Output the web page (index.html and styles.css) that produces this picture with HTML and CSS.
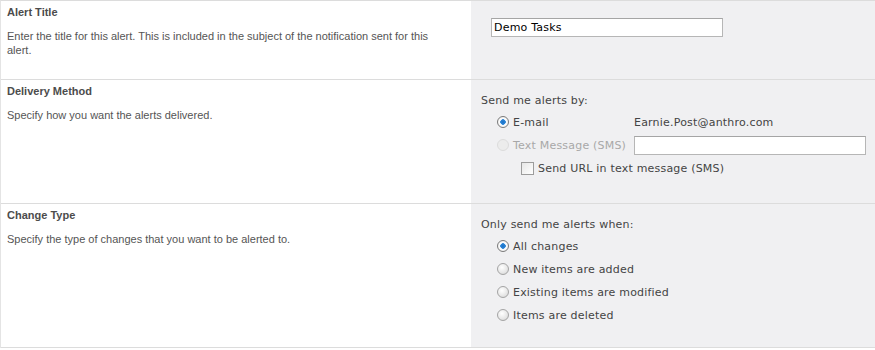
FILE: index.html
```html
<!DOCTYPE html>
<html lang="en">
<head>
    <meta charset="UTF-8">
    <title>New Alert</title>
    <link rel="stylesheet" href="styles.css">
</head>
<body>
    <div class="form-table">
        <!-- Alert Title -->
        <div class="form-row row-title">
            <div class="form-label">
                <h3>Alert Title</h3>
                <p>Enter the title for this alert. This is included in the subject of the notification sent for this alert.</p>
            </div>
            <div class="form-body">
                <input type="text" class="text-box title-box" value="Demo Tasks">
            </div>
        </div>

        <!-- Delivery Method -->
        <div class="form-row row-delivery">
            <div class="form-label">
                <h3>Delivery Method</h3>
                <p>Specify how you want the alerts delivered.</p>
            </div>
            <div class="form-body">
                <div class="caption">Send me alerts by:</div>
                <div class="option-list">
                    <label class="option">
                        <input type="radio" name="delivery" checked>
                        <span class="option-text delivery-text">E-mail</span>
                        <span class="address">Earnie.Post@anthro.com</span>
                    </label>
                    <label class="option disabled">
                        <input type="radio" name="delivery" disabled>
                        <span class="option-text delivery-text">Text Message (SMS)</span>
                        <input type="text" class="text-box sms-box">
                    </label>
                    <label class="option sub-option">
                        <input type="checkbox">
                        <span class="option-text">Send URL in text message (SMS)</span>
                    </label>
                </div>
            </div>
        </div>

        <!-- Change Type -->
        <div class="form-row row-change">
            <div class="form-label">
                <h3>Change Type</h3>
                <p>Specify the type of changes that you want to be alerted to.</p>
            </div>
            <div class="form-body">
                <div class="caption">Only send me alerts when:</div>
                <div class="option-list">
                    <label class="option"><input type="radio" name="change" checked><span class="option-text">All changes</span></label>
                    <label class="option"><input type="radio" name="change"><span class="option-text">New items are added</span></label>
                    <label class="option"><input type="radio" name="change"><span class="option-text">Existing items are modified</span></label>
                    <label class="option"><input type="radio" name="change"><span class="option-text">Items are deleted</span></label>
                </div>
            </div>
        </div>
    </div>
</body>
</html>
```

FILE: styles.css
```css
body {
    margin: 0;
    padding: 0;
    background-color: #ffffff;
}
.form-table {
    border-top: 1px solid #dcdcdc;
    border-left: 1px solid #e4e4e4;
}
.form-row {
    display: grid;
    grid-template-columns: 470px 1fr;
    border-bottom: 1px solid #dcdcdc;
}
.row-title {
    height: 78px;
}
.row-delivery {
    height: 123px;
}
.row-change {
    height: 143px;
}
.form-label {
    padding: 4px 36px 4px 6px;
    font-family: "Liberation Sans", Arial, sans-serif;
    font-size: 11px;
    color: #555;
}
.form-label h3 {
    margin: 0;
    font-size: 11px;
    font-weight: bold;
    line-height: 14px;
    color: #4c4c4c;
}
.form-label p {
    margin: 10px 0 0;
    line-height: 14px;
}
.form-body {
    background-color: #f0f0f2;
    padding: 15px 10px 10px 10px;
    font-family: "DejaVu Sans", Verdana, sans-serif;
    font-size: 11px;
    letter-spacing: 0.2px;
    color: #444;
}
.text-box {
    box-sizing: border-box;
    height: 19px;
    border: 1px solid #b6b6b6;
    border-top-color: #a5a5a5;
    background: #fff;
    font-family: "DejaVu Sans", Verdana, sans-serif;
    font-size: 11px;
    letter-spacing: 0.2px;
    color: #000;
    padding: 0 2px;
    margin: 0;
}
.title-box {
    width: 232px;
    margin: 2px 0 0 10px;
}
.row-delivery .form-body,
.row-change .form-body {
    padding-top: 14px;
}
.caption {
    line-height: 14px;
}
.option-list {
    margin: 7px 0 0 16px;
    display: flex;
    flex-direction: column;
    gap: 9px;
}
.option {
    display: flex;
    align-items: center;
    height: 14px;
}
.option-text {
    margin-left: 4px;
}
.delivery-text {
    width: 121px;
    white-space: nowrap;
}
.option.disabled {
    color: #a8a8a8;
}
.sms-box {
    width: 232px;
}
.sub-option {
    margin-left: 24px;
}
.option input[type="radio"] {
    appearance: none;
    width: 12px;
    height: 12px;
    margin: 0;
    border-radius: 50%;
    border: 1px solid #a4a4a4;
    background: radial-gradient(circle at 40% 35%, #ffffff 0%, #e6e6e6 60%, #cfcfcf 100%);
    box-sizing: border-box;
}
.option input[type="radio"]:checked {
    border-color: #7a7a7a;
    background: radial-gradient(circle at 50% 50%, #1b6fc4 0, #2c86d8 2.5px, #ffffff 3px, #e4e4e4 100%);
}
.option input[type="radio"]:disabled {
    border-color: #dcdcdc;
    background: #ececec;
}
.option input[type="checkbox"] {
    appearance: none;
    width: 13px;
    height: 13px;
    margin: 0;
    border: 1px solid #9c9c9c;
    background: linear-gradient(135deg, #e6e6e6, #ffffff);
    box-sizing: border-box;
}
```
